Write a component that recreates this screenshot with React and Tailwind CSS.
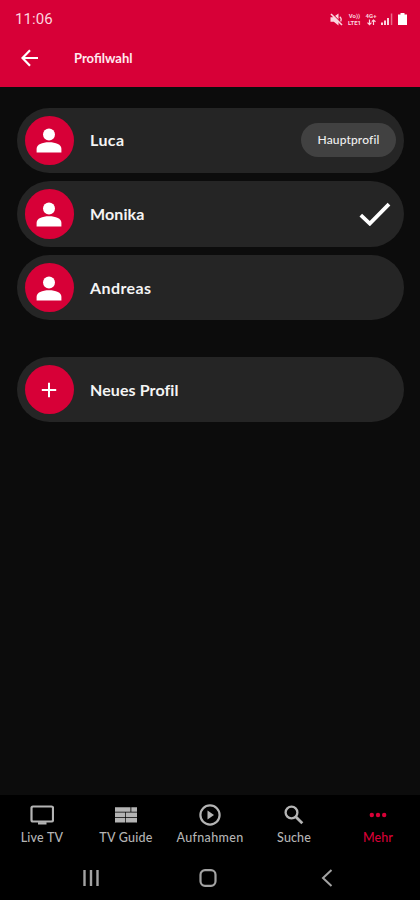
import React from "react";

function PersonIcon() {
  return (
    <svg className="size-[26px]" viewBox="0 0 26 26" fill="#fff">
      <circle cx="13" cy="7.500" r="6" />
      <path d="M.6 25.600v-3.800c0-4.400 5.500-6.600 12.400-6.600s12.400 2.200 12.400 6.600v3.800z" />
    </svg>
  );
}

function PlusIcon() {
  return (
    <svg className="size-4" viewBox="0 0 16 16" fill="none" stroke="#fff" strokeWidth="2">
      <path d="M8 .8v14.4M.8 8h14.4" />
    </svg>
  );
}

function CheckIcon() {
  return (
    <svg className="mr-[13px] h-6 w-8" viewBox="0 0 32 24" fill="none" stroke="#fff" strokeWidth="3.8">
      <path d="M1.8 13.200l9 8.400L30 2.200" />
    </svg>
  );
}

function Row({ icon, label, labelClass, children }) {
  return (
    <div className="flex h-[65.5px] items-center rounded-full bg-[#252525] pl-2">
      <div className="flex size-[49.5px] items-center justify-center rounded-full bg-[#d70037]">{icon}</div>
      <span className={"ml-4 flex-1 whitespace-nowrap text-[16px] leading-5 font-bold text-[#f4f4f4] " + labelClass}>{label}</span>
      {children}
    </div>
  );
}

function StatusIcons() {
  return (
    <div className="flex items-center text-[#fbd5df]">
      <svg className="h-[13px] w-[13px]" viewBox="0 0 13 13" fill="currentColor">
        <path d="M.5 4.200h2.700L8.500.5v12L3.800 8.800H.5z" />
        <path d="M1.800.4L12.800 11.400" stroke="#d70037" strokeWidth="1.200" />
        <path d="M1 1l11 11" stroke="currentColor" strokeWidth="1.600" />
        <path d="M9.800 3.800c1.500 1.200 1.700 3 .9 4.600" fill="none" stroke="currentColor" strokeWidth="1.200" />
      </svg>
      <div className="ml-[3px] w-[17px] text-center text-[6px] leading-[7px] font-bold">
        <div>Vo))</div>
        <div>LTE1</div>
      </div>
      <div className="ml-px w-[14px] text-center text-[6px] leading-[7px] font-bold">
        <div>4G+</div>
        <svg className="mx-auto h-[7px] w-[9px]" viewBox="0 0 9 7" fill="none" stroke="currentColor" strokeWidth="1.200">
          <path d="M2.500 .5v5M.5 3.700l2 2 2-2M6.500 6V1M4.800 2.700L6.500 1l2 1.700" />
        </svg>
      </div>
      <svg className="ml-[3px] h-3 w-3" viewBox="0 0 12 12" fill="currentColor">
        <path d="M0 9.500h2V12H0zM3 7.500h2V12H3zM6 5h2v7H6z" />
        <path d="M9.800 .5h1.500V12H9.800z" opacity=".5" />
      </svg>
      <svg className="ml-[5px] h-3 w-[9px]" viewBox="0 0 9 12" fill="#fff">
        <path d="M2.500 0h4v1.500H9V12H0V1.500h2.500z" />
      </svg>
    </div>
  );
}

const tvIcon = (
  <svg className="h-5 w-6" viewBox="0 0 24 20" fill="none" stroke="currentColor" strokeWidth="2.200">
    <rect x="1.500" y="1.500" width="21.500" height="15" rx="1.500" />
    <path d="M8 18.300h8.500" strokeWidth="2.400" />
  </svg>
);
const guideIcon = (
  <svg className="h-5 w-6" viewBox="0 0 24 20" fill="currentColor">
    <path d="M1 2.200h15.500v4.600H1zM17.300 2.200H23v4.600h-5.700zM1 7.500h10v4.600H1zM11.700 7.500H23v4.600H11.700zM1 12.800h10v4.600H1zM11.700 12.800H23v4.600H11.700z" />
  </svg>
);
const playIcon = (
  <svg className="h-[22px] w-[22px]" viewBox="0 0 22 22" fill="none" stroke="currentColor" strokeWidth="2.200">
    <circle cx="11" cy="11" r="9.600" />
    <path d="M8.500 6.500v9l6.500-4.500z" fill="currentColor" stroke="none" />
  </svg>
);
const searchIcon = (
  <svg className="h-5 w-5" viewBox="0 0 20 20" fill="none" stroke="currentColor">
    <circle cx="7.500" cy="7.500" r="5.900" strokeWidth="2.300" />
    <path d="M12 12l6.300 6.300" strokeWidth="2.800" />
  </svg>
);
const moreIcon = (
  <svg className="h-5 w-[18px]" viewBox="0 0 18 20" fill="currentColor">
    <circle cx="2.800" cy="10" r="2.200" />
    <circle cx="9" cy="10" r="2.200" />
    <circle cx="15.200" cy="10" r="2.200" />
  </svg>
);

const tabs = [
  { label: "Live TV", icon: tvIcon, tone: "text-[#b4b4b4]", spacing: "tracking-[0.2px]" },
  { label: "TV Guide", icon: guideIcon, tone: "text-[#b4b4b4]", spacing: "tracking-[0.25px]" },
  { label: "Aufnahmen", icon: playIcon, tone: "text-[#b4b4b4]", spacing: "tracking-[0.35px]" },
  { label: "Suche", icon: searchIcon, tone: "text-[#b4b4b4]", spacing: "tracking-[0.1px]" },
  { label: "Mehr", icon: moreIcon, tone: "text-[#d70037]", spacing: "tracking-[0.1px]" },
];

export default function App() {
  return (
    <div className="flex h-[900px] w-[420px] flex-col overflow-hidden bg-[#0c0c0c] font-['Lato',sans-serif] text-white">
      <header className="h-[86.5px] shrink-0 bg-[#d70037]">
        <div className="flex h-[38px] items-center justify-between pr-[13px] pl-[15px] font-['Roboto',sans-serif]">
          <span className="text-[15px] tracking-[0.1px] text-[#fbd5df]">11:06</span>
          <StatusIcons />
        </div>
        <div className="flex h-10 items-center pl-[21px]">
          <svg className="h-[18px] w-[18px]" viewBox="0 0 18 18" fill="none" stroke="#fff" strokeWidth="2.200">
            <path d="M17 9H2M9 1.200L1.500 9 9 16.800" />
          </svg>
          <h1 className="ml-[35px] pt-px text-[13px] font-bold text-[#ffe9ef]">Profilwahl</h1>
        </div>
      </header>

      <main className="flex-1 pt-[21px] pr-4 pl-[16.5px]">
        <div className="flex flex-col gap-[8.2px]">
          <Row icon={<PersonIcon />} label="Luca" labelClass="tracking-[0.4px]">
            <span className="mr-2 flex h-[34px] w-[95px] items-center justify-center rounded-full bg-[#414141] text-[12px] font-medium tracking-[0.15px] text-[#efefef]">Hauptprofil</span>
          </Row>
          <Row icon={<PersonIcon />} label="Monika" labelClass="tracking-[0.1px]">
            <CheckIcon />
          </Row>
          <Row icon={<PersonIcon />} label="Andreas" labelClass="tracking-[0.4px]" />
        </div>
        <div className="mt-[36.600px]">
          <Row icon={<PlusIcon />} label="Neues Profil" labelClass="tracking-[0.1px]" />
        </div>
      </main>

      <nav className="grid h-[60px] shrink-0 grid-cols-5 bg-black">
        {tabs.map((tab) => (
          <div key={tab.label} className={"flex flex-col items-center pt-2 " + tab.tone}>
            <div className="flex h-6 items-center">{tab.icon}</div>
            <span className={"mt-[3px] text-[12.500px] leading-4 font-medium whitespace-nowrap " + tab.spacing}>{tab.label}</span>
          </div>
        ))}
      </nav>

      <div className="flex h-[45px] shrink-0 items-center bg-black pl-[82px] text-[#a3a3a3]">
        <svg className="h-[18px] w-[18px]" viewBox="0 0 18 18" stroke="currentColor" strokeWidth="2.400">
          <path d="M2.500 1v16M9 1v16M15.500 1v16" />
        </svg>
        <svg className="ml-[99px] h-[18px] w-[18px]" viewBox="0 0 18 18" fill="none" stroke="currentColor" strokeWidth="2.200">
          <rect x="1.500" y="1.200" width="15" height="15.600" rx="4.500" />
        </svg>
        <svg className="ml-[104px] h-[18px] w-[12px]" viewBox="0 0 12 18" fill="none" stroke="currentColor" strokeWidth="2">
          <path d="M10.500 1L2 9l8.500 8" />
        </svg>
      </div>
    </div>
  );
}
